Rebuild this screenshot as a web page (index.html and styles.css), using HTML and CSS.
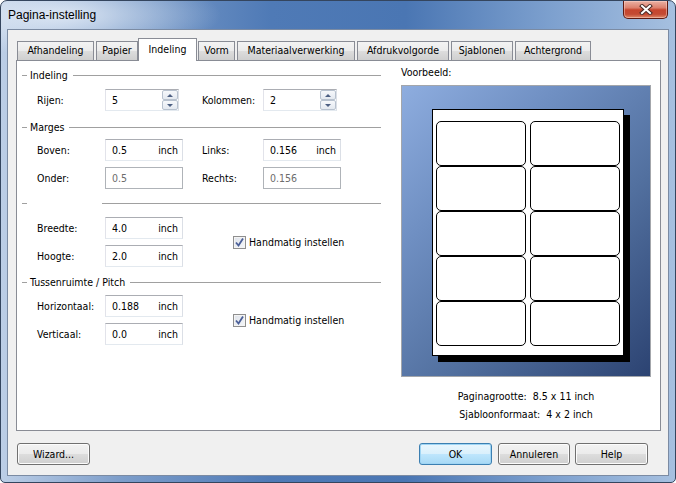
FILE: index.html
```html
<!DOCTYPE html>
<html>
<head>
<meta charset="utf-8">
<title>Pagina-instelling</title>
<link rel="stylesheet" href="styles.css">
</head>
<body>
<div class="window">
  <div class="titlebar">
    <span class="title">Pagina-instelling</span>
    <div class="close">
      <svg width="14" height="11" viewBox="0 0 14 11"><path d="M3 2 L11 9 M11 2 L3 9" stroke="#4a2a26" stroke-width="4" stroke-linecap="square"/><path d="M3 2 L11 9 M11 2 L3 9" stroke="#ffffff" stroke-width="2" stroke-linecap="square"/></svg>
    </div>
  </div>
  <div class="client">
    <div class="tabs">
      <div class="tab">Afhandeling</div>
      <div class="tab">Papier</div>
      <div class="tab selected">Indeling</div>
      <div class="tab">Vorm</div>
      <div class="tab">Materiaalverwerking</div>
      <div class="tab">Afdrukvolgorde</div>
      <div class="tab">Sjablonen</div>
      <div class="tab">Achtergrond</div>
    </div>
    <div class="panel">
      <div class="left">
        <div class="group g1"><span class="dash"></span><span class="gtext">Indeling</span><span class="gline"></span></div>
        <div class="row r1">
          <span class="lbl">Rijen:</span>
          <div class="field spin"><span class="val">5</span><span class="spinbtns"><span class="sb up"></span><span class="sb down"></span></span></div>
          <span class="lbl2">Kolommen:</span>
          <div class="field spin"><span class="val">2</span><span class="spinbtns"><span class="sb up"></span><span class="sb down"></span></span></div>
        </div>

        <div class="group g2"><span class="dash"></span><span class="gtext">Marges</span><span class="gline"></span></div>
        <div class="row r2">
          <span class="lbl">Boven:</span>
          <div class="field"><span class="val">0.5</span><span class="unit">inch</span></div>
          <span class="lbl2">Links:</span>
          <div class="field"><span class="val">0.156</span><span class="unit">inch</span></div>
        </div>
        <div class="row r3">
          <span class="lbl">Onder:</span>
          <div class="field disabled"><span class="val">0.5</span></div>
          <span class="lbl2">Rechts:</span>
          <div class="field disabled"><span class="val">0.156</span></div>
        </div>

        <div class="group g3"><span class="dash"></span><span class="gtext empty"></span><span class="gline"></span></div>
        <div class="pair p1">
          <div class="stack">
            <div class="row">
              <span class="lbl">Breedte:</span>
              <div class="field"><span class="val">4.0</span><span class="unit">inch</span></div>
            </div>
            <div class="row">
              <span class="lbl">Hoogte:</span>
              <div class="field"><span class="val">2.0</span><span class="unit">inch</span></div>
            </div>
          </div>
          <div class="check"><span class="box"><svg width="11" height="11" viewBox="0 0 11 11"><path d="M2 5.5 L4.5 8.5 L9 1.5" fill="none" stroke="#4b5f98" stroke-width="1.8"/></svg></span><span>Handmatig instellen</span></div>
        </div>

        <div class="group g4"><span class="dash"></span><span class="gtext">Tussenruimte / Pitch</span><span class="gline"></span></div>
        <div class="pair p2">
          <div class="stack">
            <div class="row">
              <span class="lbl">Horizontaal:</span>
              <div class="field"><span class="val">0.188</span><span class="unit">inch</span></div>
            </div>
            <div class="row">
              <span class="lbl">Verticaal:</span>
              <div class="field"><span class="val">0.0</span><span class="unit">inch</span></div>
            </div>
          </div>
          <div class="check"><span class="box"><svg width="11" height="11" viewBox="0 0 11 11"><path d="M2 5.5 L4.5 8.5 L9 1.5" fill="none" stroke="#4b5f98" stroke-width="1.8"/></svg></span><span>Handmatig instellen</span></div>
        </div>
      </div>

      <div class="right">
        <div class="plabel">Voorbeeld:</div>
        <div class="preview">
          <div class="page">
            <div class="lab"></div><div class="lab"></div>
            <div class="lab"></div><div class="lab"></div>
            <div class="lab"></div><div class="lab"></div>
            <div class="lab"></div><div class="lab"></div>
            <div class="lab"></div><div class="lab"></div>
          </div>
        </div>
        <div class="info info1">Paginagrootte:&nbsp; 8.5 x 11 inch</div>
        <div class="info">Sjabloonformaat:&nbsp; 4 x 2 inch</div>
      </div>
    </div>
    <div class="buttons">
      <div class="btn wizard">Wizard...</div>
      <div class="btn ok">OK</div>
      <div class="btn cancel">Annuleren</div>
      <div class="btn help">Help</div>
    </div>
  </div>
</div>
</body>
</html>
```
FILE: styles.css
```css
* { box-sizing: border-box; }
html, body { margin: 0; padding: 0; }
body {
  width: 676px;
  height: 483px;
  overflow: hidden;
  background: #ffffff;
  font-family: "DejaVu Sans Condensed", "Liberation Sans", sans-serif;
  font-size: 10.5px;
  color: #000;
}
.window {
  width: 676px;
  height: 483px;
  border: 1px solid #34455e;
  border-radius: 7px 7px 5px 5px;
  background:
    radial-gradient(ellipse 160px 40px at 60px 14px, rgba(230,238,248,0.85), rgba(230,238,248,0) 100%),
    linear-gradient(90deg, #bccee6 0%, #7c9dca 18%, #4f7ab6 40%, #4a76b3 60%, #7ea1cf 82%, #a6c0e0 100%);
  display: flex;
  flex-direction: column;
  overflow: hidden;
}
.titlebar {
  height: 28px;
  display: flex;
  align-items: flex-start;
  flex-shrink: 0;
}
.title {
  font-family: "Liberation Sans", sans-serif;
  font-size: 12px;
  line-height: 15px;
  padding: 7px 0 0 7px;
  color: #000;
}
.close {
  margin-left: auto;
  margin-right: 7px;
  width: 45px;
  height: 18px;
  border: 1px solid #5e1a12;
  border-top: none;
  border-radius: 0 0 5px 5px;
  background: linear-gradient(180deg, #eab1a4 0%, #dc806d 40%, #c6452e 52%, #c44a33 78%, #e08a6a 100%);
  display: flex;
  align-items: center;
  justify-content: center;
  box-shadow: inset 0 0 0 1px rgba(255,220,210,0.45);
}
.client {
  margin: 0 6px 6px 6px;
  height: 447px;
  border: 1px solid #7b8ba3;
  background: #f0f0f0;
  padding: 8px 7px 0 8px;
  display: flex;
  flex-direction: column;
}
.tabs {
  height: 22px;
  display: flex;
  align-items: flex-end;
  padding-left: 1px;
  flex-shrink: 0;
}
.tab {
  height: 19px;
  line-height: 17px;
  text-align: center;
  border: 1px solid #898c95;
  border-bottom: none;
  background: linear-gradient(180deg, #f3f3f3 0%, #ebebeb 50%, #dddddd 51%, #cfcfcf 100%);
  margin-right: 2px;
  white-space: nowrap;
}
.tab:nth-child(1) { width: 77px; }
.tab:nth-child(2) { width: 42px; }
.tab:nth-child(3) { width: 59px; }
.tab:nth-child(4) { width: 37px; }
.tab:nth-child(5) { width: 118px; }
.tab:nth-child(6) { width: 92px; }
.tab:nth-child(7) { width: 62px; }
.tab:nth-child(8) { width: 76px; }
.tab.selected {
  height: 23px;
  line-height: 20px;
  background: #ffffff;
  margin-left: -2px;
  margin-right: 1px;
  margin-bottom: -1px;
  position: relative;
  z-index: 1;
}
.panel {
  height: 371px;
  border: 1px solid #898c95;
  background: #ffffff;
  display: flex;
  padding-left: 5px;
  flex-shrink: 0;
}
.left {
  width: 359px;
  padding-top: 7px;
  display: flex;
  flex-direction: column;
}
.group {
  height: 14px;
  display: flex;
  align-items: center;
}
.dash { width: 5px; height: 1px; background: #a0a0a0; }
.gtext { margin-left: 3px; line-height: 14px; white-space: nowrap; }
.gtext.empty { width: 67px; }
.gline { flex: 1; height: 1px; background: #a0a0a0; margin-left: 5px; }
.g2 { margin-top: 9px; }
.g3 { margin-top: 7px; }
.g4 { margin-top: 8px; }
.row {
  height: 22px;
  display: flex;
  align-items: center;
  padding-left: 15px;
}
.r1 { margin-top: 7px; }
.r2 { margin-top: 5px; }
.r3 { margin-top: 6px; }
.lbl { width: 68px; white-space: nowrap; }
.lbl2 { width: 61px; margin-left: 19px; white-space: nowrap; }
.r1 .lbl2 { margin-left: 23px; }
.field {
  width: 78px;
  height: 22px;
  border: 1px solid;
  border-color: #abadb3 #dbdfe6 #e3e9ef #e2e3ea;
  background: #fff;
  display: flex;
  align-items: center;
  justify-content: space-between;
  padding: 0 4px 0 6px;
}
.field.disabled {
  border-color: #afb3b8;
  color: #6d6d6d;
}
.field.spin {
  width: 74px;
  padding-right: 0;
}
.spinbtns {
  width: 16px;
  height: 20px;
  display: flex;
  flex-direction: column;
}
.sb {
  flex: 1;
  border: 1px solid #b8c2cf;
  border-radius: 2px;
  background: linear-gradient(180deg, #f6f8fb 0%, #e4e9f0 100%);
  display: flex;
  align-items: center;
  justify-content: center;
}
.sb.up::after {
  content: "";
  border-left: 3px solid transparent;
  border-right: 3px solid transparent;
  border-bottom: 3px solid #4c5f82;
}
.sb.down::after {
  content: "";
  border-left: 3px solid transparent;
  border-right: 3px solid transparent;
  border-top: 3px solid #4c5f82;
}
.pair {
  display: flex;
  align-items: center;
}
.p1 { margin-top: 7px; }
.p2 { margin-top: 6px; }
.stack {
  display: flex;
  flex-direction: column;
  gap: 6px;
}
.check {
  display: flex;
  align-items: center;
  margin-left: 50px;
  white-space: nowrap;
}
.box {
  width: 13px;
  height: 13px;
  border: 1px solid #8f8f8f;
  background: linear-gradient(135deg, #dfe3ea 0%, #f4f6f9 100%);
  box-shadow: inset 0 0 0 1px #f4f4f4;
  display: flex;
  align-items: center;
  justify-content: center;
  margin-right: 3px;
}
.right {
  margin-left: 20px;
  width: 250px;
  padding-top: 4px;
  display: flex;
  flex-direction: column;
}
.plabel { line-height: 14px; }
.preview {
  margin-top: 6px;
  width: 250px;
  height: 292px;
  border: 1px solid #a3a6ab;
  background: linear-gradient(135deg, #8eaddf 0%, #6f8fc2 30%, #52709f 62%, #2c4372 100%);
  padding: 23px 0 0 30px;
}
.page {
  width: 192px;
  height: 247px;
  background: #fff;
  border: 1px solid #000;
  box-shadow: 6px 6px 0 #000;
  padding: 11px 0 0 3px;
  display: grid;
  grid-template-columns: 90px 90px;
  grid-auto-rows: 45px;
  column-gap: 4px;
}
.lab {
  border: 1px solid #000;
  border-radius: 5px;
  background: #fff;
}
.info {
  text-align: center;
  line-height: 18px;
}
.info1 { margin-top: 10px; }
.buttons {
  display: flex;
  margin-top: 12px;
  padding-left: 1px;
}
.btn {
  height: 22px;
  width: 73px;
  line-height: 20px;
  text-align: center;
  border: 1px solid #707070;
  border-radius: 3px;
  background: linear-gradient(180deg, #f2f2f2 0%, #ebebeb 50%, #dddddd 51%, #cfcfcf 100%);
  box-shadow: inset 0 0 0 1px #fcfcfc;
}
.btn.ok {
  margin-left: auto;
  border-color: #3c7fb1;
  background: linear-gradient(180deg, #eaf6fd 0%, #d9f0fc 50%, #bee6fd 51%, #a7d9f5 100%);
  box-shadow: inset 0 0 0 1px #9fd5f4;
}
.btn.cancel { width: 72px; margin-left: 6px; }
.btn.help { margin-left: 5px; margin-right: 13px; }
```
